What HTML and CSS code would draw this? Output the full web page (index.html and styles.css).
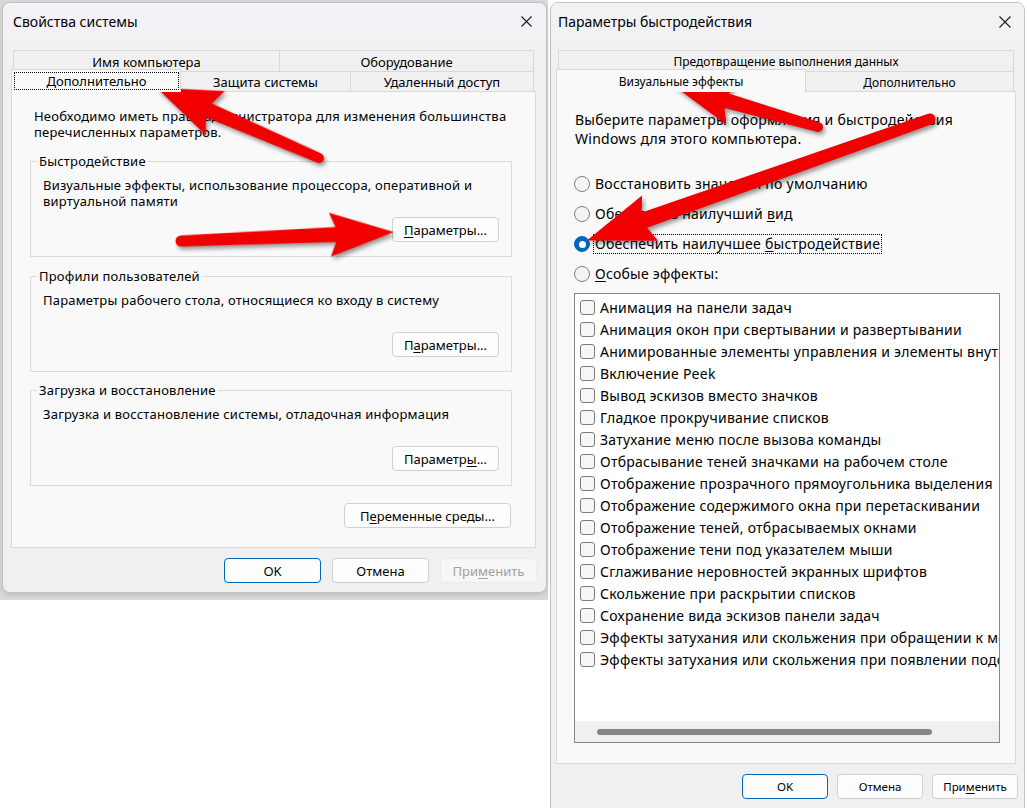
FILE: index.html
```html
<!DOCTYPE html>
<html lang="ru">
<head>
<meta charset="utf-8">
<title>Свойства системы</title>
<link rel="stylesheet" href="styles.css">
</head>
<body>
<div class="screen">
  <div class="backdrop">
    <section class="dialog dlg-left">
      <header class="titlebar tb-left">
        <span class="title">Свойства системы</span>
        <svg class="close" width="11" height="11" viewBox="0 0 11 11"><path d="M0.5 0.5L10.5 10.5M10.5 0.5L0.5 10.5" stroke="#1c1c1c" stroke-width="1.1" fill="none"/></svg>
      </header>
      <div class="dlg-body body-left">
        <div class="tabrow row-back">
          <div class="tab w-name">Имя компьютера</div>
          <div class="tab grow">Оборудование</div>
        </div>
        <div class="tabrow row-front">
          <div class="tab sel w-adv"><span class="focus">Дополнительно</span></div>
          <div class="tab w-prot">Защита системы</div>
          <div class="tab grow">Удаленный доступ</div>
        </div>
        <div class="panel panel-left">
          <p class="intro">Необходимо иметь права администратора для изменения большинства<br>перечисленных параметров.</p>
          <fieldset class="group g-first">
            <legend>Быстродействие</legend>
            <div class="group-body">
              <p class="desc">Визуальные эффекты, использование процессора, оперативной и<br>виртуальной памяти</p>
              <div class="btnrow"><button class="btn btn-param"><u>П</u>араметры...</button></div>
            </div>
          </fieldset>
          <fieldset class="group g-second">
            <legend>Профили пользователей</legend>
            <div class="group-body">
              <p class="desc">Параметры рабочего стола, относящиеся ко входу в систему</p>
              <div class="btnrow"><button class="btn btn-param">П<u>а</u>раметры...</button></div>
            </div>
          </fieldset>
          <fieldset class="group g-third">
            <legend>Загрузка и восстановление</legend>
            <div class="group-body">
              <p class="desc">Загрузка и восстановление системы, отладочная информация</p>
              <div class="btnrow"><button class="btn btn-param">Параметр<u>ы</u>...</button></div>
            </div>
          </fieldset>
          <div class="btnrow env-row"><button class="btn btn-env">П<u>е</u>ременные среды...</button></div>
        </div>
        <div class="footer footer-left">
          <button class="btn btn-foot ok">OK</button>
          <button class="btn btn-foot">Отмена</button>
          <button class="btn btn-foot disabled">При<u>м</u>енить</button>
        </div>
      </div>
    </section>
  </div>

  <section class="dialog dlg-right">
    <header class="titlebar tb-right">
      <span class="title">Параметры быстродействия</span>
      <svg class="close" width="12" height="12" viewBox="0 0 12 12"><path d="M0.5 0.5L11.5 11.5M11.5 0.5L0.5 11.5" stroke="#1c1c1c" stroke-width="1.1" fill="none"/></svg>
    </header>
    <div class="dlg-body body-right">
      <div class="tabrow row-back rt">
        <div class="tab grow">Предотвращение выполнения данных</div>
      </div>
      <div class="tabrow row-front rt">
        <div class="tab sel w-vis">Визуальные эффекты</div>
        <div class="tab grow">Дополнительно</div>
      </div>
      <div class="panel panel-right">
        <p class="intro-r">Выберите параметры оформления и быстродействия<br>Windows для этого компьютера.</p>
        <div class="radios">
          <div class="radio-row"><span class="radio"></span><span class="rlabel">Восстановить зна<u>ч</u>ения по умолчанию</span></div>
          <div class="radio-row"><span class="radio"></span><span class="rlabel">Обеспечить наилучший <u>в</u>ид</span></div>
          <div class="radio-row"><span class="radio on"></span><span class="rlabel focused">Обеспечить наилучшее <u>б</u>ыстродействие</span></div>
          <div class="radio-row"><span class="radio"></span><span class="rlabel"><u>О</u>собые эффекты:</span></div>
        </div>
        <div class="listbox">
          <div class="items">
            <div class="item"><span class="check"></span><span class="ilabel">Анимация на панели задач</span></div>
            <div class="item"><span class="check"></span><span class="ilabel">Анимация окон при свертывании и развертывании</span></div>
            <div class="item"><span class="check"></span><span class="ilabel">Анимированные элементы управления и элементы внутри окна</span></div>
            <div class="item"><span class="check"></span><span class="ilabel">Включение Peek</span></div>
            <div class="item"><span class="check"></span><span class="ilabel">Вывод эскизов вместо значков</span></div>
            <div class="item"><span class="check"></span><span class="ilabel">Гладкое прокручивание списков</span></div>
            <div class="item"><span class="check"></span><span class="ilabel">Затухание меню после вызова команды</span></div>
            <div class="item"><span class="check"></span><span class="ilabel">Отбрасывание теней значками на рабочем столе</span></div>
            <div class="item"><span class="check"></span><span class="ilabel">Отображение прозрачного прямоугольника выделения</span></div>
            <div class="item"><span class="check"></span><span class="ilabel">Отображение содержимого окна при перетаскивании</span></div>
            <div class="item"><span class="check"></span><span class="ilabel">Отображение теней, отбрасываемых окнами</span></div>
            <div class="item"><span class="check"></span><span class="ilabel">Отображение тени под указателем мыши</span></div>
            <div class="item"><span class="check"></span><span class="ilabel">Сглаживание неровностей экранных шрифтов</span></div>
            <div class="item"><span class="check"></span><span class="ilabel">Скольжение при раскрытии списков</span></div>
            <div class="item"><span class="check"></span><span class="ilabel">Сохранение вида эскизов панели задач</span></div>
            <div class="item"><span class="check"></span><span class="ilabel">Эффекты затухания или скольжения при обращении к меню</span></div>
            <div class="item"><span class="check"></span><span class="ilabel">Эффекты затухания или скольжения при появлении подсказок</span></div>
          </div>
          <div class="hscroll"><span class="thumb"></span></div>
        </div>
      </div>
      <div class="footer footer-right">
        <button class="btn btn-foot-r ok">OK</button>
        <button class="btn btn-foot-r">Отмена</button>
        <button class="btn btn-foot-r">При<u>м</u>енить</button>
      </div>
    </div>
  </section>
</div>

<svg class="arrows" width="1027" height="808" viewBox="0 0 1027 808">
  <g class="arrow-set">
    <path transform="translate(319 158) rotate(203.4)" d="M0,-5 L120,-7.5 L113,-24 L177,0 L113,24 L120,7.5 L0,5 A5,5 0 0 1 0,-5 Z"/>
    <path transform="translate(181 241) rotate(-2.4)" d="M0,-5.5 L155,-7.5 L149,-22 L213,0 L149,22 L155,7.5 L0,5.5 A5.5,5.5 0 0 1 0,-5.5 Z"/>
    <path transform="translate(818 127) rotate(196)" d="M0,-5 L95,-7.5 L89,-23 L150,0 L89,23 L95,7.5 L0,5 A5,5 0 0 1 0,-5 Z"/>
    <path transform="translate(930 119) rotate(160.5)" d="M0,-5.5 L303,-8 L297,-24 L364,0 L297,24 L303,8 L0,5.5 A5.5,5.5 0 0 1 0,-5.5 Z"/>
  </g>
</svg>
</body>
</html>
```

FILE: styles.css
```css
* { box-sizing: border-box; }
html, body { margin: 0; padding: 0; }
body {
  width: 1027px;
  height: 808px;
  overflow: hidden;
  background: #ffffff;
  font-family: "Noto Sans", "Open Sans", sans-serif;
  color: #000;
  position: relative;
}
p { margin: 0; }
u { text-underline-offset: 2px; }

.screen { display: flex; align-items: flex-start; height: 808px; }

.backdrop {
  flex: none;
  width: 548px;
  height: 600px;
  background: #d9d9d9;
  padding: 2px 1px 0 2px;
}

.dialog {
  border: 1px solid #c2c2c2;
  border-radius: 8px;
  background: #f0f0f0;
  overflow: hidden;
  display: flex;
  flex-direction: column;
}
.dlg-left { width: 545px; height: 591px; box-shadow: 0 2px 5px rgba(0,0,0,0.12); }
.dlg-right { flex: none; width: 475px; height: 830px; margin: 2px 0 0 2px; }

.titlebar {
  flex: none;
  height: 37px;
  background: #f3f0f6;
  display: flex;
  align-items: center;
  justify-content: space-between;
}
.tb-left { padding: 0 14px 0 10px; }
.tb-right { padding: 0 13px 0 7px; background: #f2f1f4; }
.title { font-size: 14px; letter-spacing: 0; }
.close { display: block; }

.body-left { padding: 10px 10px 0 8px; font-size: 13px; letter-spacing: 0.2px; }
.body-right { padding: 10px 8px 0 5px; font-size: 14px; letter-spacing: 0.25px; }

/* tabs */
.tabrow { display: flex; }
.row-back { height: 21px; margin: 0 2px; }
.row-front { height: 20px; padding: 0 2px; align-items: flex-end; }
.tab {
  height: 100%;
  border: 1px solid #d9d9d9;
  border-bottom: none;
  background: #f0f0f0;
  display: flex;
  align-items: center;
  justify-content: center;
  white-space: nowrap;
  padding-top: 1px;
  letter-spacing: 0;
}
.tab + .tab { border-left: none; }
.tab.sel {
  height: 23px;
  margin-left: -2px;
  margin-bottom: -1px;
  background: #f9f9f9;
  position: relative;
  z-index: 1;
  border-left: 1px solid #d9d9d9;
  padding-top: 0;
}
.tab.sel + .tab { border-left: none; }
.grow { flex: 1; }
.w-name { width: 267px; }
.w-adv { width: 170px; flex: none; }
.w-prot { width: 170px; flex: none; }
.w-vis { width: 250px; flex: none; }
.rt .tab { font-size: 12px; }
.focus {
  align-self: stretch;
  flex: 1;
  margin: 2px 1px 2px 2px;
  border: 1px dotted #000;
  display: flex;
  align-items: center;
  justify-content: center;
}

.panel { background: #f9f9f9; border: 1px solid #d9d9d9; }
.panel-left { height: 457px; }
.panel-right { height: 673px; }

/* left panel */
.intro { margin: 16px 10px 0 22px; line-height: 16px; white-space: nowrap; }
.group {
  margin: 0 23px 0 18px;
  padding: 0;
  border: 1px solid #dcdcdc;
  min-width: 0;
}
.g-first { margin-top: 13px; }
.g-second { margin-top: 11px; }
.g-third { margin-top: 10px; }
.group legend { margin-left: 6px; padding: 0 2px; line-height: 16px; }
.group-body { padding: 8px 12px 14px 12px; }
.desc { min-height: 32px; line-height: 16px; white-space: nowrap; }
.btnrow { display: flex; justify-content: flex-end; margin-top: 8px; }
.env-row { margin: 17px 24px 0 0; }

.btn {
  font-family: inherit;
  color: #000;
  background: #fdfdfd;
  border: 1px solid #d0d0d0;
  border-radius: 4px;
  padding: 0;
  height: 25px;
  white-space: nowrap;
  letter-spacing: 0;
}
.btn-param { width: 107px; font-size: 13px; }
.btn-env { width: 167px; font-size: 13px; }
.btn-foot { width: 97px; font-size: 13px; }
.btn-foot-r { width: 86px; font-size: 11.5px; }
.btn.ok { border-color: #0067c0; }
.btn.disabled { background: #f7f7f7; border-color: #ebebeb; color: #a0a0a0; }

.footer { display: flex; justify-content: flex-end; }
.footer-left { margin: 10px -1px 0 0; gap: 11px; }
.footer-right { margin: 10px -2px 0 0; gap: 9px; }

/* right panel */
.intro-r { margin: 18px 0 0 18px; line-height: 19px; white-space: nowrap; }
.radios { margin-top: 21px; }
.radio-row { height: 30px; display: flex; align-items: center; padding-left: 17px; white-space: nowrap; }
.radio {
  flex: none;
  width: 16px;
  height: 16px;
  border-radius: 50%;
  border: 1px solid #7f7f7f;
  background: #f4f4f4;
  display: flex;
  align-items: center;
  justify-content: center;
}
.radio.on { background: #0067c0; border-color: #0067c0; }
.radio.on::after { content: ""; width: 7px; height: 7px; border-radius: 50%; background: #fff; }
.rlabel { margin-left: 3px; padding: 0 1px; line-height: 18px; border: 1px solid transparent; }
.rlabel.focused { border: 1px dotted #000; }

.listbox {
  margin: 4px 0 0 17px;
  width: 426px;
  height: 450px;
  background: #fff;
  border: 1px solid #828790;
  display: flex;
  flex-direction: column;
}
.items { flex: 1; overflow: hidden; padding-top: 2px; }
.item { height: 22px; display: flex; align-items: center; padding-left: 5px; white-space: nowrap; }
.check {
  flex: none;
  width: 15px;
  height: 15px;
  border: 1px solid #7c7c7c;
  border-radius: 3px;
  background: #f6f6f6;
}
.ilabel { margin-left: 5px; }
.hscroll { flex: none; height: 21px; background: #f0f0f0; display: flex; align-items: center; }
.thumb { margin-left: 22px; width: 335px; height: 6px; border-radius: 3px; background: #868686; }

/* annotation arrows */
.arrows { position: absolute; left: 0; top: 0; pointer-events: none; }
.arrow-set { fill: #f20000; filter: drop-shadow(2px 3px 2px rgba(0,0,0,0.4)); }
```
